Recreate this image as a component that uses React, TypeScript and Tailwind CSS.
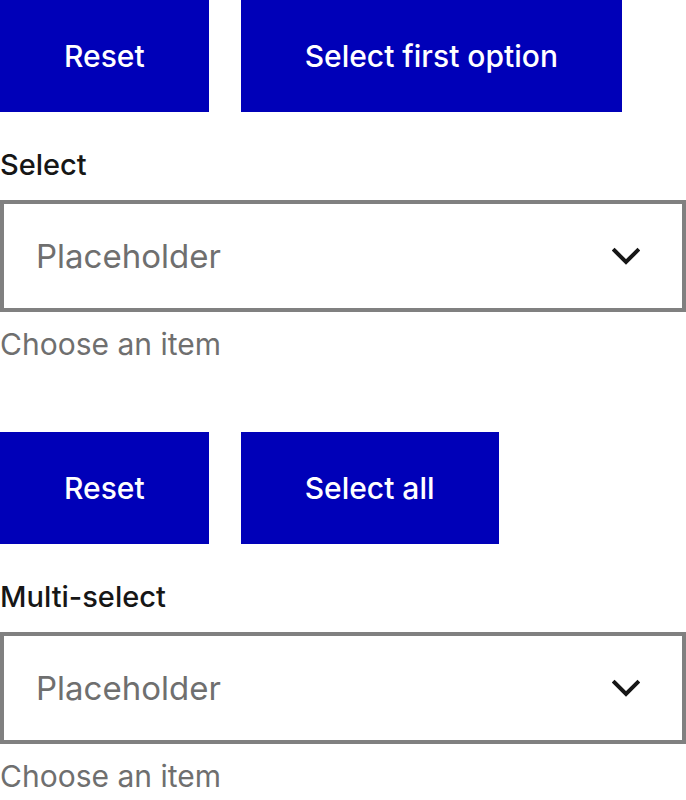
import { useState } from 'react';

const font = { fontFamily: 'Inter, "Noto Sans", sans-serif' };

function Chevron() {
  return (
    <svg width="28" height="20" viewBox="0 0 28 20" fill="none" className="shrink-0 mt-[2px]">
      <path d="M2.5 3.5 L14 15 L25.5 3.5" stroke="#161616" strokeWidth="4" strokeLinecap="square" />
    </svg>
  );
}

function Field({
  label,
  secondLabel,
  topClass,
}: {
  label: string;
  secondLabel: string;
  topClass: string;
}) {
  const [value, setValue] = useState('');
  return (
    <section className={topClass}>
      <div className="flex gap-8">
        <button
          onClick={() => setValue('')}
          className="h-[112px] px-16 bg-[#0000b8] text-white text-[30px] font-medium"
        >
          Reset
        </button>
        <button
          onClick={() => setValue('Option 1')}
          className="h-[112px] px-16 bg-[#0000b8] text-white text-[30px] font-medium"
        >
          {secondLabel}
        </button>
      </div>
      <div className="mt-[35px] text-[29px] leading-[36px] font-medium text-[#161616]">{label}</div>
      <div className="mt-[17px] h-[112px] border-4 border-[#808080] bg-white flex items-center justify-between pl-8 pr-[42px]">
        <span className={`text-[33px] mt-[2px] ${value ? 'text-[#161616]' : 'text-[#6f6f6f]'}`}>
          {value || 'Placeholder'}
        </span>
        <Chevron />
      </div>
      <div className="mt-[14px] text-[30px] leading-[36px] text-[#6f6f6f]">Choose an item</div>
    </section>
  );
}

export default function App() {
  return (
    <div className="w-[686px] bg-white" style={font}>
      <Field label="Select" secondLabel="Select first option" topClass="" />
      <Field label="Multi-select" secondLabel="Select all" topClass="mt-[70px]" />
    </div>
  );
}
